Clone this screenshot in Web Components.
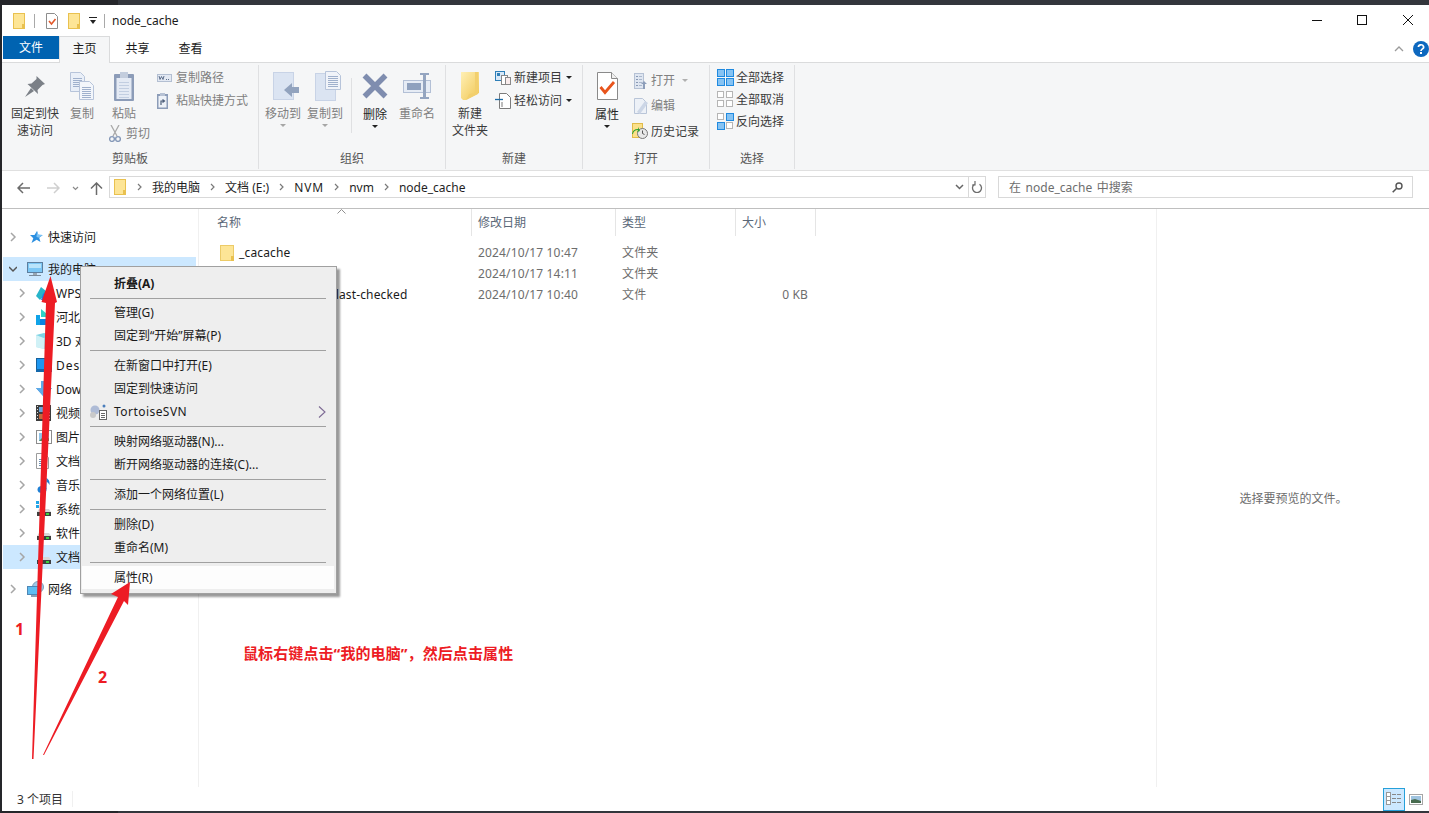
<!DOCTYPE html>
<html lang="zh">
<head>
<meta charset="utf-8">
<title>node_cache</title>
<style>
	html, body { margin: 0; height: 100%; }
	body {
		position: relative;
		width: 1429px;
		height: 813px;
		overflow: hidden;
		background: linear-gradient(90deg, #25262a 118px, #33363c 118px);
		font: 12px/17px "Noto Sans", "Noto Sans CJK SC", sans-serif;
		color: #1a1a1a;
	}
</style>
</head>
<body>

<x-window>
	<x-titlebar slot="top">node_cache</x-titlebar>
	<x-tabs slot="top"></x-tabs>
	<x-ribbon slot="top">
		<x-ribbon-group label="剪贴板" style="width:257px">
			<x-big-button style="width:66px"><x-icon slot="icon" name="pin"></x-icon>固定到快<br>速访问</x-big-button>
			<x-big-button disabled style="width:28px"><x-icon slot="icon" name="copy"></x-icon>复制</x-big-button>
			<x-stack style="width:46px;margin-left:5px">
				<x-big-button disabled><x-icon slot="icon" name="paste"></x-icon>粘贴</x-big-button>
				<x-ribbon-item disabled style="height:22px;margin-left:8px;--icon-box:17px"><x-icon slot="icon" name="scissors"></x-icon>剪切</x-ribbon-item>
			</x-stack>
			<x-stack style="margin-left:10px;padding-top:1px">
				<x-ribbon-item disabled><x-icon slot="icon" name="word"></x-icon>复制路径</x-ribbon-item>
				<x-ribbon-item disabled><x-icon slot="icon" name="shortcut"></x-icon>粘贴快捷方式</x-ribbon-item>
			</x-stack>
		</x-ribbon-group>

		<x-ribbon-group label="组织" style="width:187px">
			<x-big-button disabled arrow style="width:36px;margin-left:6px"><x-icon slot="icon" name="move" style="margin-left:6px"></x-icon>移动到</x-big-button>
			<x-big-button disabled arrow style="width:36px;margin-left:6px"><x-icon slot="icon" name="copyto" style="margin-left:6px"></x-icon>复制到</x-big-button>
			<x-vline style="margin:13px 8px 0 8px"></x-vline>
			<x-big-button dark arrow style="width:30px"><x-icon slot="icon" name="del"></x-icon>删除</x-big-button>
			<x-big-button disabled style="width:36px;margin-left:9px"><x-icon slot="icon" name="rename"></x-icon>重命名</x-big-button>
		</x-ribbon-group>

		<x-ribbon-group label="新建" style="width:137px">
			<x-big-button style="width:36px;margin-left:6px"><x-icon slot="icon" name="newfolder"></x-icon>新建<br>文件夹</x-big-button>
			<x-stack style="margin-left:6px;padding-top:1px">
				<x-ribbon-item menu style="--icon-box:20px"><x-icon slot="icon" name="newitem" style="margin-left:1px"></x-icon>新建项目</x-ribbon-item>
				<x-ribbon-item menu style="--icon-box:20px"><x-icon slot="icon" name="easy" style="margin-left:1px"></x-icon>轻松访问</x-ribbon-item>
			</x-stack>
		</x-ribbon-group>

		<x-ribbon-group label="打开" style="width:127px">
			<x-big-button dark arrow style="width:24px;margin-left:12px"><x-icon slot="icon" name="props"></x-icon>属性</x-big-button>
			<x-stack style="margin-left:13px;padding-top:3px">
				<x-ribbon-item disabled menu style="height:25px"><x-icon slot="icon" name="open" style="margin-left:2px"></x-icon>打开</x-ribbon-item>
				<x-ribbon-item disabled style="height:25px"><x-icon slot="icon" name="edit" style="margin-left:2px"></x-icon>编辑</x-ribbon-item>
				<x-ribbon-item style="height:26px"><x-icon slot="icon" name="history"></x-icon>历史记录</x-ribbon-item>
			</x-stack>
		</x-ribbon-group>

		<x-ribbon-group label="选择" style="width:85px">
			<x-stack style="margin-left:7px;padding-top:1px">
				<x-ribbon-item style="height:22px"><x-icon slot="icon" name="selall"></x-icon>全部选择</x-ribbon-item>
				<x-ribbon-item style="height:22px"><x-icon slot="icon" name="selnone"></x-icon>全部取消</x-ribbon-item>
				<x-ribbon-item style="height:22px"><x-icon slot="icon" name="selinv"></x-icon>反向选择</x-ribbon-item>
			</x-stack>
		</x-ribbon-group>
	</x-ribbon>
	<x-addressbar slot="top"></x-addressbar>

	<x-nav slot="nav">
		<x-tree-item icon="star" class="gap">快速访问</x-tree-item>
		<x-tree-item icon="monitor" open selected class="gap">我的电脑</x-tree-item>
		<x-tree-item icon="wps" child>WPS云盘</x-tree-item>
		<x-tree-item icon="hebei" child>河北</x-tree-item>
		<x-tree-item icon="cube" child>3D 对象</x-tree-item>
		<x-tree-item icon="desktop" child style="letter-spacing:1px">Desktop</x-tree-item>
		<x-tree-item icon="download" child>Downloads</x-tree-item>
		<x-tree-item icon="video" child>视频</x-tree-item>
		<x-tree-item icon="pics" child>图片</x-tree-item>
		<x-tree-item icon="docs" child>文档</x-tree-item>
		<x-tree-item icon="music" child>音乐</x-tree-item>
		<x-tree-item icon="sysdrive" child>系统 (C:)</x-tree-item>
		<x-tree-item icon="drive" child>软件 (D:)</x-tree-item>
		<x-tree-item icon="drive" child selected>文档 (E:)</x-tree-item>
		<x-tree-item icon="network" class="gap">网络</x-tree-item>
	</x-nav>

	<x-filelist slot="list">
		<x-file-row icon="folder14" date="2024/10/17 10:47" type="文件夹">_cacache</x-file-row>
		<x-file-row icon="folder14" date="2024/10/17 14:11" type="文件夹">_logs</x-file-row>
		<x-file-row icon="file14" date="2024/10/17 10:40" type="文件" size="0 KB">_update-notifier-last-checked</x-file-row>
	</x-filelist>

	<x-preview slot="preview">选择要预览的文件。</x-preview>
	<x-statusbar slot="bottom">3 个项目</x-statusbar>
</x-window>

<x-context-menu>
	<x-menu-item bold>折叠(A)</x-menu-item>
	<x-menu-sep style="height:6px"></x-menu-sep>
	<x-menu-item>管理(G)</x-menu-item>
	<x-menu-item>固定到“开始”屏幕(P)</x-menu-item>
	<x-menu-sep></x-menu-sep>
	<x-menu-item>在新窗口中打开(E)</x-menu-item>
	<x-menu-item>固定到快速访问</x-menu-item>
	<x-menu-item submenu style="letter-spacing:.45px"><x-icon slot="icon" name="svn"></x-icon>TortoiseSVN</x-menu-item>
	<x-menu-sep></x-menu-sep>
	<x-menu-item>映射网络驱动器(N)...</x-menu-item>
	<x-menu-item>断开网络驱动器的连接(C)...</x-menu-item>
	<x-menu-sep></x-menu-sep>
	<x-menu-item>添加一个网络位置(L)</x-menu-item>
	<x-menu-sep></x-menu-sep>
	<x-menu-item>删除(D)</x-menu-item>
	<x-menu-item>重命名(M)</x-menu-item>
	<x-menu-sep></x-menu-sep>
	<x-menu-item hot>属性(R)</x-menu-item>
</x-context-menu>

<x-annotations></x-annotations>

<script>
// icon bodies, sized in real pixels: [width, height, svg content]
const PAGE = "#e9eff8", EDGE = "#b7c4da", SLATE = "#8c9cb8";
const lines = (x, y, w, n, c = "#9fb0cc", step = 2) => {
	let s = "";
	for (let i = 0; i < n; i++) s += `<rect x="${x}" y="${y + i * step}" width="${w}" height="1" fill="${c}"/>`;
	return s;
};
const panes = (a, b, c, d) => {
	const box = (x, y, on) => on
		? `<rect x="${x + .5}" y="${y + .5}" width="7" height="7" fill="#86c3f3" stroke="#1f8ae0"/>`
		: `<rect x="${x + .5}" y="${y + .5}" width="6" height="6" fill="#fff" stroke="#b5b5b5"/>`;
	return box(0, 0, a) + box(9, 0, b) + box(0, 9, c) + box(9, 9, d);
};
const driveBody = `<path d="M3 8h10l2 3v4H1v-4z" fill="#d7d7d7"/><rect x="1" y="11" width="14" height="4" fill="#3f3f3f"/><rect x="10" y="12" width="3" height="2" fill="#3ed13e"/>`;

const ICONS = {
	folder12: [12, 16, `<rect x=".5" y=".5" width="11" height="15" fill="#fde596" stroke="#e9c14f"/><rect x="9" y="11" width="3" height="5" fill="#e9c14f"/>`],
	folder14: [14, 16, `<rect x=".5" y=".5" width="13" height="15" fill="#fde596" stroke="#eccb68"/><rect x="11" y="11" width="3" height="5" fill="#e9c14f"/>`],
	file14: [14, 16, `<path d="M1.5.5h8l3 3v12h-11z" fill="#fff" stroke="#a8a8a8"/>`],
	titledoc: [12, 16, `<path d="M.5.5h8l3 3v12H.5z" fill="#fff" stroke="#8d8d8d"/><path d="M3 8l2.5 3L9.5 6" fill="none" stroke="#e2582a" stroke-width="1.6"/>`],
	pin: [20, 21, `<path d="M11.5 0L20 8l-2.5 1-5 5 .5 4L2.5 8l4-.5 5-4.5z" fill="#7b8087"/><path d="M6 12L0 21l9-6z" fill="#7b8087"/>`],
	copy: [24, 28, `<path d="M.5.5h10l4 4v15H.5z" fill="${PAGE}" stroke="${EDGE}"/>${lines(3, 6, 9, 5)}<path d="M9.5 9.5h10l4 4v14h-14z" fill="#f3f6fb" stroke="${EDGE}"/>${lines(12, 15, 9, 6)}`],
	paste: [20, 29, `<rect x="0" y="2" width="20" height="27" rx="1" fill="${SLATE}"/><rect x="2.5" y="6" width="15" height="21" fill="#e4eaf4"/>${lines(5, 10, 10, 6, "#c2cee1", 3)}<rect x="6" y="0" width="8" height="6" fill="#c3cddd"/>`],
	word: [15, 8, `<rect x=".5" y=".5" width="14" height="7" fill="#e3e9f3" stroke="#b3bfd2"/><path d="M2 2l1 3.5L4.5 2.500 6 5.500 7 2" fill="none" stroke="#5f708c"/><path d="M9 5.500h1M11 5.500h1" stroke="#5f708c"/>`],
	shortcut: [11, 16, `<rect x="0" y="1" width="11" height="15" fill="${SLATE}"/><rect x="1.500" y="3" width="8" height="11.500" fill="#eef2f8"/><rect x="3" y="0" width="5" height="3" fill="#b7c2d4"/><path d="M4 12V8h3M5.500 6.500L7.500 8 5.500 9.500" fill="none" stroke="#4e5f7b" stroke-width="1.200"/>`],
	scissors: [12, 17, `<path d="M2 0l6 11M10 0L4 11" stroke="#a9a9a9" stroke-width="1.300" fill="none"/><circle cx="3" cy="14" r="2.400" fill="none" stroke="#8699b8" stroke-width="1.400"/><circle cx="9" cy="14" r="2.400" fill="none" stroke="#8699b8" stroke-width="1.400"/>`],
	move: [26, 28, `<rect x=".5" y=".5" width="20" height="27" fill="#dbe4f2" stroke="#c8d3e6"/><path d="M11 18l8-7v4h7v6h-7v4z" fill="#92a3be"/>`],
	copyto: [26, 30, `<rect x=".5" y="2.500" width="20" height="27" fill="#dbe4f2" stroke="#c8d3e6"/><path d="M10.500.5h11l4 4v14h-15z" fill="#f0f3f9" stroke="${EDGE}"/>${lines(13, 5, 10, 6)}`],
	del: [26, 26, `<path d="M2.500 2.500l21 21M23.500 2.500l-21 21" stroke="#7f8daf" stroke-width="5.500"/>`],
	rename: [28, 26, `<rect x=".5" y="7.500" width="27" height="12" fill="#e6ecf5" stroke="#b3c0d6"/><rect x="4" y="10" width="14" height="7" fill="#8fa1be"/><path d="M21.500 2v22" stroke="#94a5c0" stroke-width="3"/><path d="M17 1h9M17 25h9" stroke="#94a5c0" stroke-width="2"/>`],
	newfolder: [18, 28, `<defs><linearGradient id="nf" x1="0" y1="0" x2="1" y2="1"><stop offset="0" stop-color="#fff0b5"/><stop offset="1" stop-color="#f0c653"/></linearGradient></defs><path d="M0 0h15l3 0v21l-13 7H2L0 26z" fill="url(#nf)"/><path d="M14 0h3v22l-12 6 3-6 6-1z" fill="#f2cf6d"/>`],
	newitem: [16, 14, `<rect x=".5" y=".5" width="9" height="9" fill="#d8e8f7" stroke="#2e7fb8"/><rect x="2" y="2" width="3" height="3" fill="#2e7fb8"/><rect x="6.500" y="4.500" width="6" height="9" fill="#fff" stroke="#888"/><rect x="10.500" y="6.500" width="5" height="7" fill="#f9ecec" stroke="#888"/>`],
	easy: [16, 16, `<path d="M4.500 .5h7l4 4v11h-11z" fill="#fff" stroke="#7b7b7b"/><path d="M0 6.500h8" stroke="#1b6ca8" stroke-width="1.300"/><path d="M7 9v5" stroke="#7b7b7b"/>`],
	props: [21, 28, `<path d="M.5.5h14l6 6v21H.5z" fill="#fff" stroke="#8a8a8a"/><path d="M14.500.5v6h6" fill="#f0f0f0" stroke="#8a8a8a"/><path d="M3.500 15l4.500 5.500L17 10" fill="none" stroke="#e8541c" stroke-width="2.800"/>`],
	open: [13, 16, `<rect x=".5" y=".5" width="9" height="15" fill="#dfe6f1" stroke="#b5c1d4"/>${lines(2, 3, 2, 4, "#8899b5", 3)}${lines(5, 3, 3, 4, "#a9b7cc", 3)}<path d="M7 11l3-3 3 3h-2v5H9v-5z" fill="#8d9eba"/>`],
	edit: [14, 16, `<path d="M.5.5h8l4 4v11H.5z" fill="#edf1f7" stroke="#b9c5d8"/><path d="M3 14L11 3l3 2-8 11z" fill="#ccd6e6"/>`],
	history: [16, 16, `<rect x=".5" y=".5" width="10" height="14" fill="#fbe08a" stroke="#e0bb4a"/><circle cx="10.500" cy="10.500" r="5" fill="#e8e8e8" stroke="#777"/><path d="M10.500 7.500v3l2 1" stroke="#555" fill="none"/><path d="M1 11a5 5 0 0 1 5-4l-1 2 3-1-2-4v2a6 6 0 0 0-6 5z" fill="#2ea12e"/>`],
	selall: [17, 17, panes(1, 1, 1, 1)],
	selnone: [17, 17, panes(0, 0, 0, 0)],
	selinv: [17, 17, panes(0, 1, 1, 0)],
	star: [16, 14, `<path d="M10 1l1.300 3.800 4.400.3-3.500 2.700 1.300 4.300-3.800-2.400-5.200 3.300 1.800-4.800L3 5h4.500z" fill="#2b8fe0"/><path d="M10 1l1.300 3.800 4.400.3-3.500 2.700-2.700-.8z" fill="#7cc3f5"/>`],
	monitor: [16, 15, `<rect x=".5" y=".5" width="15" height="10" fill="#7cc7f5" stroke="#5d7f9f"/><rect x="2" y="2" width="12" height="4" fill="#b9e4fb"/><rect x="6" y="11" width="4" height="2" fill="#9aa7b3"/><rect x="2" y="13" width="12" height="1" fill="#7b8a99"/>`],
	wps: [16, 15, `<path d="M5 1l5 4 2 0-8 9-4-4z" fill="#27b4c9"/><path d="M7 8l4-4 5 4-3 6H5z" fill="#1f7be6"/>`],
	hebei: [16, 16, `<path d="M5 0l6 5v3H5z" fill="#2fd2c7"/><rect x="0" y="6" width="4" height="10" fill="#10a3e8"/><path d="M4 10h12v6H4z" fill="#0c84e0"/>`],
	cube: [16, 16, `<path d="M0 2l8 2 8-2v12l-8 2-8-2z" fill="#a9e6ef"/><path d="M0 2l8 3v11l-8-2z" fill="#d0f1f6"/><path d="M8 5l8-3-8-2-8 2z" fill="#7ed3e4"/>`],
	desktop: [16, 14, `<rect x=".5" y=".5" width="15" height="13" fill="#1e96f0" stroke="#16609b"/><rect x="0" y="11" width="16" height="3" fill="#1468ab"/>`],
	download: [16, 16, `<path d="M5 0h6v7h5l-8 9-8-9h5z" fill="#2a80d2"/><path d="M5 0h3v16L0 7h5z" fill="#5eaae8"/>`],
	video: [15, 16, `<rect x="0" y="0" width="15" height="16" fill="#3d3d3d"/><rect x="3" y="2" width="9" height="5" fill="#6aa3d8"/><rect x="3" y="9" width="9" height="5" fill="#c36a3d"/>${lines(1, 1, 1, 5, "#ddd", 3)}${lines(13, 1, 1, 5, "#ddd", 3)}`],
	pics: [16, 14, `<rect x=".5" y=".5" width="15" height="13" fill="#fff" stroke="#8c8c8c"/><rect x="3" y="3" width="10" height="8" fill="#8fc3e8"/><path d="M3 11l4-4 3 2 3-1v3z" fill="#4d8a59"/>`],
	docs: [13, 16, `<path d="M.5.5h8l4 4v11H.5z" fill="#fff" stroke="#9c9c9c"/>${lines(3, 6, 7, 4, "#6d8fb0", 2)}`],
	music: [14, 16, `<path d="M9 1h1.500v11H9z" fill="#1f7fd4"/><ellipse cx="6" cy="12.500" rx="4.500" ry="3.500" fill="#1f7fd4"/><path d="M10.500 1c2 1.500 3.500 3 3 7-1-2-2-3-3-3z" fill="#1f7fd4"/>`],
	sysdrive: [16, 16, `<rect x="0" y="0" width="3" height="3" fill="#1fa5e8"/><rect x="4" y="0" width="3" height="3" fill="#1fa5e8"/><rect x="0" y="4" width="3" height="3" fill="#1fa5e8"/><rect x="4" y="4" width="3" height="3" fill="#1fa5e8"/>${driveBody}`],
	drive: [16, 16, driveBody],
	network: [18, 16, `<circle cx="11" cy="6" r="5.500" fill="#9fc8e6" stroke="#7f9fb8"/><rect x=".5" y="5.500" width="12" height="8" fill="#5fbcf0" stroke="#4f87b5"/><rect x="4" y="14" width="6" height="2" fill="#8aa0b5"/>`],
	svn: [17, 16, `<circle cx="5" cy="6" r="4.500" fill="#aebbd6"/><circle cx="3" cy="11" r="3" fill="#c9c9c9"/><circle cx="14" cy="2" r="1.500" fill="#4a7ebb"/><rect x="9.500" y="6.500" width="7" height="9" fill="#fff" stroke="#666"/>${lines(11, 9, 4, 3, "#666", 2)}`],
	details: [16, 14, `<rect x=".5" y=".5" width="4" height="4" fill="#fff" stroke="#999"/><rect x=".5" y="4.500" width="4" height="4" fill="#fff" stroke="#999"/><rect x=".5" y="8.500" width="4" height="4" fill="#fff" stroke="#999"/>${lines(6, 2, 4, 3, "#888", 4)}${lines(11, 2, 4, 3, "#888", 4)}`],
	previewpane: [14, 11, `<rect x=".5" y=".5" width="13" height="10" fill="#fff" stroke="#a6a6a6"/><rect x="2" y="2" width="10" height="7" fill="#9fc4e0"/><path d="M2 9V6l4-1 6 2v2z" fill="#476b4e"/>`],
};

function make(tag, css, html) {
	customElements.define(tag, class extends HTMLElement {
		constructor() {
			super();
			this.attachShadow({ mode: "open" }).innerHTML = `<style>${css}</style>${html}`;
		}
	});
}

class XIcon extends HTMLElement {
	constructor() {
		super();
		this.attachShadow({ mode: "open" });
	}
	connectedCallback() {
		const [w, h, body] = ICONS[this.getAttribute("name")];
		this.shadowRoot.innerHTML = `<style>:host { display: block; flex: none; width: ${w}px; height: ${h}px; } svg { display: block; }</style>
			<svg width="${w}" height="${h}" viewBox="0 0 ${w} ${h}">${body}</svg>`;
	}
}
customElements.define("x-icon", XIcon);

make("x-window", `
	:host { position: absolute; top: 5px; left: 2px; right: 0; bottom: 2px; display: flex; flex-direction: column; background: #fff; }
	.main { flex: 1; min-height: 0; display: flex; }
	.list { flex: 1; min-width: 0; }
	.preview { flex: none; }
`, `
	<slot name="top"></slot>
	<div class="main">
		<slot name="nav"></slot>
		<div class="list"><slot name="list"></slot></div>
		<div class="preview"><slot name="preview"></slot></div>
	</div>
	<slot name="bottom"></slot>
`);

make("x-titlebar", `
	:host { display: flex; align-items: center; height: 31px; flex: none; padding-left: 11px; }
	.sep { width: 1px; height: 14px; background: #a9a9a9; }
	.drop { width: 8px; height: 7px; margin-left: 9px; }
	.ctl { margin-left: auto; display: flex; }
	.ctl svg { display: block; width: 45px; height: 31px; }
`, `
	<x-icon name="folder12"></x-icon>
	<span class="sep" style="margin-left:9px"></span>
	<x-icon name="titledoc" style="margin-left:11px"></x-icon>
	<x-icon name="folder12" style="margin-left:10px"></x-icon>
	<svg class="drop" viewBox="0 0 8 7"><rect width="8" height="1" fill="#222"/><path d="M1 3h6L4 7z" fill="#222"/></svg>
	<span class="sep" style="margin:0 7px"></span>
	<slot></slot>
	<div class="ctl">
		<svg viewBox="0 0 45 31"><path d="M18 15.500h10" stroke="#111"/></svg>
		<svg viewBox="0 0 45 31"><rect x="18.500" y="10.500" width="9" height="9" fill="none" stroke="#111"/></svg>
		<svg viewBox="0 0 45 31"><path d="M19 10l10 10M29 10L19 20" stroke="#111" fill="none"/></svg>
	</div>
`);

make("x-tabs", `
	:host { display: flex; height: 27px; flex: none; padding-left: 1px; box-sizing: border-box; border-bottom: 1px solid #dadbdc; position: relative; }
	.tab { display: flex; align-items: center; justify-content: center; height: 25px; }
	.file { width: 56px; height: 23px; background: #0063b1; color: #fff; }
	.on { width: 51px; height: 27px; box-sizing: border-box; background: #f5f6f7; border: 1px solid #dadbdc; border-bottom: 0; padding-bottom: 3px; }
	.help { position: absolute; right: 0; top: 5px; display: flex; align-items: center; gap: 9px; }
`, `
	<div class="tab file">文件</div>
	<div class="tab on">主页</div>
	<div class="tab" style="width:55px">共享</div>
	<div class="tab" style="width:51px">查看</div>
	<div class="help">
		<svg width="10" height="6" viewBox="0 0 10 6"><path d="M1 5l4-4 4 4" fill="none" stroke="#9b9b9b" stroke-width="1.300"/></svg>
		<svg width="16" height="16" viewBox="0 0 16 16"><circle cx="8" cy="8" r="8" fill="#0d68bf"/><path d="M5.400 6a2.600 2.300 0 1 1 3.800 2.100C8.300 8.700 8 9 8 10" fill="none" stroke="#fff" stroke-width="1.700"/><rect x="7" y="11" width="2" height="2" fill="#fff"/></svg>
	</div>
`);

make("x-ribbon", `
	:host { display: flex; flex: none; height: 107px; box-sizing: border-box; padding-top: 2px; padding-bottom: 1px; background: #f5f6f7; }
`, `<slot></slot>`);

make("x-ribbon-group", `
	:host { display: flex; flex-direction: column; flex: none; box-sizing: border-box; border-right: 1px solid #dfe0e2; }
	.body { flex: 1; display: flex; align-items: flex-start; min-height: 0; }
	.label { height: 20px; line-height: 20px; text-align: center; color: #555; }
`, `
	<div class="body"><slot></slot></div>
	<div class="label"></div>
`);
customElements.whenDefined("x-ribbon-group").then(() => {
	document.querySelectorAll("x-ribbon-group").forEach((g) => {
		g.shadowRoot.querySelector(".label").textContent = g.getAttribute("label");
	});
});

make("x-stack", `:host { display: flex; flex-direction: column; flex: none; }`, `<slot></slot>`);
make("x-vline", `:host { display: block; flex: none; width: 1px; height: 55px; background: #dfe0e2; }`, ``);

make("x-big-button", `
	:host { display: flex; flex-direction: column; align-items: center; flex: none; color: #3a3a3a; white-space: nowrap; text-align: center; padding-top: 5px; }
	:host([disabled]) { color: #808080; }
	:host([dark]) { color: #262626; }
	.icon { height: 32px; display: flex; align-items: center; justify-content: center; margin-bottom: 3px; }
	:host([dark]) .icon { margin-bottom: 4px; }
	.arrow { display: none; width: 0; height: 0; margin-top: 2px; border: 3px solid transparent; border-top: 3px solid #a6a6a6; border-bottom: 0; }
	:host([arrow]) .arrow { display: block; }
	:host([dark]) .arrow { border-top-color: #222; }
`, `
	<div class="icon"><slot name="icon"></slot></div>
	<div><slot></slot></div>
	<div class="arrow"></div>
`);

make("x-ribbon-item", `
	:host { display: flex; align-items: center; height: 23px; color: #3a3a3a; white-space: nowrap; }
	:host([disabled]) { color: #808080; }
	.icon { width: var(--icon-box, 19px); flex: none; display: flex; align-items: center; }
	.arrow { display: none; margin-left: 4px; width: 0; height: 0; border: 3px solid transparent; border-top: 3px solid #222; border-bottom: 0; }
	:host([menu]) .arrow { display: block; }
	:host([disabled]) .arrow { margin-left: 7px; border-top-color: #b0b0b0; }
`, `
	<div class="icon"><slot name="icon"></slot></div>
	<slot></slot>
	<div class="arrow"></div>
`);

make("x-crumb", `
	:host { display: flex; align-items: center; white-space: nowrap; color: #1f1f1f; }
	svg { margin: 0 10px; }
`, `
	<svg width="5" height="8" viewBox="0 0 5 8"><path d="M1 1l3 3-3 3" fill="none" stroke="#7a7a7a" stroke-width="1.200"/></svg>
	<slot></slot>
`);

make("x-addressbar", `
	:host { display: flex; align-items: center; flex: none; height: 39px; box-sizing: border-box; border-top: 1px solid #e0e0e0; border-bottom: 1px solid #bfbfbf; padding: 0 0 5px 15px; }
	.nav { display: flex; align-items: center; height: 100%; padding-top: 2px; box-sizing: border-box; }
	.box { height: 22px; box-sizing: border-box; border: 1px solid #d9d9d9; display: flex; align-items: center; }
	.path { width: 877px; margin-left: 6px; padding-left: 4px; }
	.end { margin-left: auto; display: flex; height: 100%; align-items: center; }
	.end .div { width: 1px; height: 100%; background: #d9d9d9; }
	.search { width: 415px; margin-left: 12px; padding: 0 9px 0 10px; color: #6d6d6d; justify-content: space-between; word-spacing: 1.500px; }
`, `
	<div class="nav">
		<svg width="13" height="12" viewBox="0 0 13 12"><path d="M6 1L1 6l5 5M1 6h12" fill="none" stroke="#6b6b6b" stroke-width="1.500"/></svg>
		<svg width="13" height="12" viewBox="0 0 13 12" style="margin-left:17px"><path d="M7 1l5 5-5 5M12 6H0" fill="none" stroke="#cfcfcf" stroke-width="1.500"/></svg>
		<svg width="7" height="5" viewBox="0 0 7 5" style="margin-left:12px"><path d="M1 1l2.500 2.500L6 1" fill="none" stroke="#8a8a8a" stroke-width="1.200"/></svg>
		<svg width="13" height="13" viewBox="0 0 13 13" style="margin-left:11px"><path d="M1 6.500l5.500-5.500 5.500 5.500M6.500 1v12" fill="none" stroke="#6b6b6b" stroke-width="1.500"/></svg>
	</div>
	<div class="box path">
		<x-icon name="folder12" style="margin-right:1px"></x-icon>
		<x-crumb>我的电脑</x-crumb><x-crumb>文档 (E:)</x-crumb><x-crumb style="letter-spacing:.9px">NVM</x-crumb><x-crumb>nvm</x-crumb><x-crumb>node_cache</x-crumb>
		<div class="end">
			<svg width="9" height="6" viewBox="0 0 9 6" style="margin-right:4px"><path d="M1 1l3.500 3.500L8 1" fill="none" stroke="#666" stroke-width="1.500"/></svg>
			<div class="div"></div>
			<svg width="16" height="12" viewBox="0 0 16 12"><path d="M5.500 2.500a4.500 4.500 0 1 0 5 0" fill="none" stroke="#6d6d6d" stroke-width="1.300" transform="translate(0 .8)"/><path d="M6 0v4H3" fill="none" stroke="#6d6d6d" stroke-width="1.200"/></svg>
		</div>
	</div>
	<div class="box search">
		<span>在 node_cache 中搜索</span>
		<svg width="11" height="11" viewBox="0 0 11 11"><circle cx="7" cy="4" r="3" fill="none" stroke="#555" stroke-width="1.400"/><path d="M4.700 6.300L.7 10.300" stroke="#555" stroke-width="1.600"/></svg>
	</div>
`);

make("x-nav", `
	:host { display: block; flex: none; width: 197px; box-sizing: border-box; border-right: 1px solid #f0f0f0; padding: 16px 2px 0 1px; height: 100%; }
	::slotted(.gap) { margin-top: 8px; }
	::slotted(.gap:first-child) { margin-top: 0; }
`, `<slot></slot>`);

make("x-tree-item", `
	:host { display: flex; align-items: center; height: 24px; padding-left: 6px; white-space: nowrap; overflow: hidden; color: #1a1a1a; }
	:host([child]) { padding-left: 15px; }
	:host([selected]) { background: #cce8ff; }
	.chev { width: 8px; height: 10px; flex: none; margin-right: 10px; }
	.icon { width: 21px; flex: none; display: flex; align-items: center; }
	:host([child]) .icon { width: 20px; }
`, `
	<svg class="chev" viewBox="0 0 8 10"></svg>
	<div class="icon"></div>
	<slot></slot>
`);
customElements.whenDefined("x-tree-item").then(() => {
	document.querySelectorAll("x-tree-item").forEach((t) => {
		const root = t.shadowRoot;
		root.querySelector(".chev").innerHTML = t.hasAttribute("open")
			? `<path d="M0 3l4 4 4-4" fill="none" stroke="#555" stroke-width="1.500"/>`
			: `<path d="M2 1l4 4-4 4" fill="none" stroke="#a6a6a6" stroke-width="1.500"/>`;
		const ic = document.createElement("x-icon");
		ic.setAttribute("name", t.getAttribute("icon"));
		root.querySelector(".icon").append(ic);
	});
});

make("x-filelist", `
	:host { display: block; padding-left: 12px; }
	.head { display: grid; grid-template-columns: 261px 144px 120px 80px; height: 27px; margin-bottom: 6px; position: relative; color: #5b6878; }
	.head div { display: flex; align-items: center; padding-left: 6px; border-right: 1px solid #e5e5e5; }
	svg { position: absolute; left: 126px; top: 0; }
`, `
	<div class="head">
		<div>名称</div><div>修改日期</div><div>类型</div><div>大小</div>
		<svg width="9" height="5" viewBox="0 0 9 5"><path d="M.5 4.500l4-4 4 4" fill="none" stroke="#8f8f8f"/></svg>
	</div>
	<slot></slot>
`);

make("x-file-row", `
	:host { display: grid; grid-template-columns: 261px 144px 120px 80px; height: 21px; align-items: center; white-space: nowrap; letter-spacing: .15px; }
	.name { display: flex; align-items: center; padding-left: 9px; gap: 4px; color: #1a1a1a; }
	.i { display: block; margin-right: 1px; }
	.meta { padding-left: 6px; color: #6d6d6d; }
	.size { text-align: right; padding-right: 8px; color: #6d6d6d; }
`, `
	<div class="name"><span class="i"></span><slot></slot></div>
	<div class="meta date"></div>
	<div class="meta type"></div>
	<div class="size"></div>
`);
customElements.whenDefined("x-file-row").then(() => {
	document.querySelectorAll("x-file-row").forEach((r) => {
		const root = r.shadowRoot;
		root.querySelector(".date").textContent = r.getAttribute("date");
		root.querySelector(".type").textContent = r.getAttribute("type");
		root.querySelector(".size").textContent = r.getAttribute("size") || "";
		root.querySelector(".i").innerHTML = `<x-icon name="${r.getAttribute("icon")}"></x-icon>`;
	});
});

make("x-preview", `
	:host { display: flex; align-items: center; justify-content: center; width: 273px; height: 100%; box-sizing: border-box; border-left: 1px solid #f0f0f0; padding-left: 1px; color: #6d6d6d; }
`, `<slot></slot>`);

make("x-statusbar", `
	:host { display: flex; align-items: center; flex: none; height: 24px; padding-left: 15px; color: #333; }
	.sep { width: 1px; height: 16px; margin-left: 9px; background: #f0f0f0; }
	.views { margin-left: auto; display: flex; align-items: center; padding-right: 6px; }
	.on { width: 20px; height: 21px; border: 1px solid #26a0da; background: #cce8ff; display: flex; align-items: center; justify-content: center; margin-right: 4px; }
`, `
	<slot></slot><span class="sep"></span>
	<div class="views">
		<div class="on"><x-icon name="details"></x-icon></div>
		<x-icon name="previewpane"></x-icon>
	</div>
`);

make("x-context-menu", `
	:host { position: absolute; left: 80px; top: 266px; width: 257px; height: 328px; box-sizing: border-box; display: block; padding: 5px 2px 0 1px; background: #eeeeee; border: 1px solid #a0a0a0; box-shadow: 3px 3px 2px rgba(0, 0, 0, .4); }
`, `<slot></slot>`);

make("x-menu-item", `
	:host { display: flex; align-items: center; height: 23px; white-space: nowrap; color: #1a1a1a; position: relative; }
	:host([bold]) { font-weight: 700; box-sizing: border-box; padding-bottom: 1px; }
	:host([hot]) { background: #fdfdfd; }
	.icon { width: 32px; flex: none; padding-left: 8px; box-sizing: border-box; }
	svg { display: none; position: absolute; right: 8px; top: 6px; }
	:host([submenu]) svg { display: block; }
`, `
	<div class="icon"><slot name="icon"></slot></div>
	<slot></slot>
	<svg width="8" height="12" viewBox="0 0 8 12"><path d="M1 .5l6 5.500-6 5.500" fill="none" stroke="#7d6a94" stroke-width="1.100"/></svg>
`);

make("x-menu-sep", `
	:host { display: flex; align-items: center; height: 7px; padding: 0 8px; }
	div { flex: 1; height: 1px; background: #a0a0a0; }
`, `<div></div>`);

make("x-annotations", `
	:host { position: absolute; inset: 0; display: block; pointer-events: none; }
	svg { position: absolute; left: 0; top: 0; }
	span { position: absolute; color: #ed1c24; font-weight: 700; white-space: nowrap; }
`, `
	<svg width="1429" height="813" viewBox="0 0 1429 813">
		<path d="M32 759L46 303 41.500 302 50.500 276 57 302 55 303 33.500 759z" fill="#ed1c24"/>
		<path d="M43 755L118 597 111 594 130 582 128 605 124 601 44 755z" fill="#ed1c24"/>
	</svg>
	<span style="left:15px;top:619px;font-size:16px;line-height:20px">1</span>
	<span style="left:98px;top:667px;font-size:16px;line-height:20px">2</span>
	<span style="left:243px;top:642px;font-size:15px;line-height:22px;letter-spacing:.1px">鼠标右键点击“我的电脑”，然后点击属性</span>
`);
</script>
</body>
</html>
